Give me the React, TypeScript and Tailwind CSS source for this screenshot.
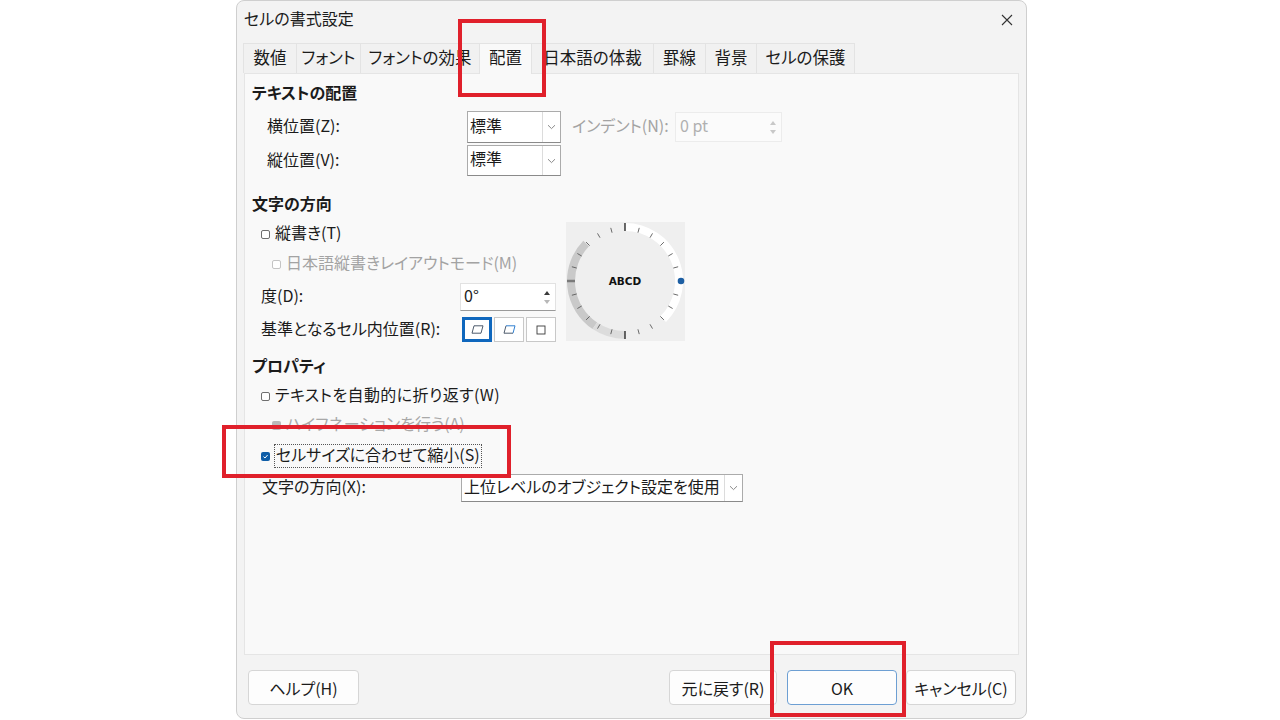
import React from 'react';

// Format Cells dialog (配置 tab)

// Noto CJK sits a little low in its line box; lift glyphs by ~2px
const T = 'leading-[20px] pb-[4px]';

const tabs: { label: string; w: string; active?: boolean }[] = [
  { label: '数値', w: 'w-[54px]' },
  { label: 'フォント', w: 'w-[65px]' },
  { label: 'フォントの効果', w: 'w-[120px]' },
  { label: '配置', w: 'w-[53px]', active: true },
  { label: '日本語の体裁', w: 'w-[123px]' },
  { label: '罫線', w: 'w-[53px]' },
  { label: '背景', w: 'w-[52px]' },
  { label: 'セルの保護', w: 'w-[99px]' },
];

const Chevron = () => (
  <svg width="9" height="6" viewBox="0 0 9 6">
    <path d="M1 1.2 L4.5 4.6 L8 1.2" fill="none" stroke="#8a8a8a" strokeWidth="1" />
  </svg>
);

const Checkbox = ({ state }: { state: 'off' | 'on' | 'disabled' | 'mixed-disabled' }) => {
  if (state === 'on') {
    return (
      <span className="flex items-center justify-center w-[9px] h-[9px] rounded-[2px] bg-[#0f5ea8]">
        <svg width="7" height="7" viewBox="0 0 7 7">
          <path d="M1.5 3.6 L3 5 L5.6 2" fill="none" stroke="#ffffff" strokeWidth="1" />
        </svg>
      </span>
    );
  }
  if (state === 'mixed-disabled') {
    return <span className="block w-[9px] h-[9px] rounded-[2px] bg-[#b9b9b9]" />;
  }
  return (
    <span
      className={
        state === 'disabled'
          ? 'block w-[9px] h-[9px] rounded-[2px] border border-[#c4c4c4] bg-white'
          : 'block w-[9px] h-[9px] rounded-[2px] border border-[#6f6f6f] bg-white'
      }
    />
  );
};

const Spin = ({ dim }: { dim?: boolean }) => (
  <div className="flex flex-col items-center justify-center gap-[5px] w-[16px]">
    <svg width="6" height="4" viewBox="0 0 6 4">
      <path d="M0 4 L3 0 L6 4 Z" fill={dim ? '#c8c8c8' : '#3a3a3a'} />
    </svg>
    <svg width="6" height="4" viewBox="0 0 6 4">
      <path d="M0 0 L3 4 L6 0 Z" fill={dim ? '#c8c8c8' : '#b8b8b8'} />
    </svg>
  </div>
);

const Heading = ({ children, className }: { children: React.ReactNode; className: string }) => (
  <div className={`h-[24px] leading-[20px] pb-[4px] font-bold text-[#1b1b1b] pl-[7px] ${className}`}>{children}</div>
);

const Dial = () => {
  const cx = 59;
  const cy = 59;
  const pt = (r: number, a: number) => {
    const rad = (a * Math.PI) / 180;
    return [cx + r * Math.cos(rad), cy - r * Math.sin(rad)];
  };
  const arc = (r: number, a1: number, a2: number) => {
    const [x1, y1] = pt(r, a1);
    const [x2, y2] = pt(r, a2);
    const large = a2 - a1 > 180 ? 1 : 0;
    return `M${x1} ${y1} A${r} ${r} 0 ${large} 0 ${x2} ${y2}`;
  };
  const ticks = [];
  for (let a = 15; a < 360; a += 15) {
    const major = a === 90 || a === 270;
    const left = a === 180;
    const [x1, y1] = pt(50, a);
    const [x2, y2] = pt(major || left ? 58 : 55, a);
    ticks.push(
      <line
        key={a}
        x1={x1}
        y1={y1}
        x2={x2}
        y2={y2}
        stroke={left ? '#7a7a7a' : major ? '#2a2a2a' : '#5a5a5a'}
        strokeWidth={left ? 2.5 : major ? 1.4 : 0.9}
      />
    );
  }
  const [dx, dy] = pt(56, 0);
  return (
    <div className="w-[119px] h-[119px] bg-[#efefef]">
      <svg width="119" height="119" viewBox="0 0 119 119">
        <path d={arc(54, -45, 90)} fill="none" stroke="#ffffff" strokeWidth="8" />
        <path d={arc(54, 136, 236)} fill="none" stroke="#c9c9c9" strokeWidth="8" />
        <path d={arc(54, 236, 270)} fill="none" stroke="#dcdcdc" strokeWidth="8" />
        {ticks}
        <circle cx={dx} cy={dy} r="3.3" fill="#1d5fa3" />
        <text
          x={cx}
          y={cy + 4}
          textAnchor="middle"
          fontSize="10.5"
          fontWeight="bold"
          fill="#111"
          fontFamily="'DejaVu Sans', sans-serif"
        >
          ABCD
        </text>
      </svg>
    </div>
  );
};

export default function App() {
  return (
    <div className="relative w-[1280px] h-[720px] overflow-hidden bg-white pl-[236px] font-['Noto_Sans_CJK_JP','Noto_Sans',sans-serif] [font-feature-settings:'palt'] text-[16px] text-[#1b1b1b]">
      <div className="flex flex-col w-[791px] h-[719px] bg-[#f3f3f3] border border-[#cfcfcf] rounded-[8px]">
        {/* title bar */}
        <div className="flex items-center justify-between h-[36px] pl-[7px] pr-[13px] pt-[1px]">
          <span className={T}>セルの書式設定</span>
          <svg width="12" height="12" viewBox="0 0 12 12">
            <path d="M1 1 L11 11 M11 1 L1 11" stroke="#333" strokeWidth="1.1" />
          </svg>
        </div>

        {/* tabs */}
        <div className="flex h-[30px] mt-[6px] ml-[7px]">
          {tabs.map((t) => (
            <div
              key={t.label}
              className={
                t.active
                  ? `${t.w} flex items-center justify-center h-[31px] -ml-px bg-[#f9f9f9] border-t border-l border-r border-[#e3e3e3] relative z-10 pb-[4px] text-[16.5px]`
                  : `${t.w} flex items-center justify-center h-[30px] -ml-px bg-[#f1f1f1] border-t border-l border-r border-[#e3e3e3] pb-[3px] text-[16.5px]`
              }
            >
              <span className="leading-[20px]">{t.label}</span>
            </div>
          ))}
        </div>

        {/* panel */}
        <div className="flex-1 flex flex-col ml-[7px] mr-[7px] bg-[#f9f9f9] border border-[#e5e5e5]">
          <Heading className="mt-[8px]">テキストの配置</Heading>

          <div className="flex items-center h-[32px] mt-[5px] pl-[22px]">
            <span className={`w-[200px] ${T}`}>横位置(Z):</span>
            <div className="flex w-[94px] h-[32px] bg-white border border-[#ababab] border-b-[#8a8a8a]">
              <span className="flex-1 pl-[2px] leading-[26px] pb-[4px]">標準</span>
              <span className="flex items-center justify-center w-[18px] border-l border-[#dcdcdc]">
                <Chevron />
              </span>
            </div>
            <span className={`ml-[11px] w-[103px] text-[#a3a3a3] ${T}`}>インデント(N):</span>
            <div className="flex w-[107px] h-[30px] bg-[#fbfbfb] border border-[#ececec]">
              <span className="flex-1 pl-[4px] leading-[24px] pb-[4px] text-[#b0b0b0]">0 pt</span>
              <Spin dim />
            </div>
          </div>

          <div className="flex items-center h-[31px] mt-[2px] pl-[22px]">
            <span className={`w-[200px] ${T}`}>縦位置(V):</span>
            <div className="flex w-[94px] h-[31px] bg-white border border-[#ababab] border-b-[#8a8a8a]">
              <span className="flex-1 pl-[2px] leading-[25px] pb-[4px]">標準</span>
              <span className="flex items-center justify-center w-[18px] border-l border-[#dcdcdc]">
                <Chevron />
              </span>
            </div>
          </div>

          <Heading className="mt-[17px]">文字の方向</Heading>

          <div className="flex mt-[5px] pl-[16px]">
            <div className="flex flex-col w-[305px]">
              <div className="flex items-center gap-[5px] h-[24px]">
                <Checkbox state="off" />
                <span className={T}>縦書き(T)</span>
              </div>
              <div className="flex items-center gap-[5px] h-[24px] mt-[6px] pl-[11px] text-[#a3a3a3]">
                <Checkbox state="disabled" />
                <span className={T}>日本語縦書きレイアウトモード(M)</span>
              </div>
              <div className="flex items-center h-[28px] mt-[7px]">
                <span className={`w-[199px] ${T}`}>度(D):</span>
                <div className="flex w-[96px] h-[28px] bg-white border border-[#e2e2e2] border-b-[#9a9a9a]">
                  <span className="flex-1 pl-[3px] leading-[22px] pb-[4px]">0°</span>
                  <Spin />
                </div>
              </div>
              <div className="flex items-center h-[25px] mt-[6px]">
                <span className={`w-[201px] ${T}`}>基準となるセル内位置(R):</span>
                <div className="flex gap-[2px]">
                  <div className="flex items-center justify-center w-[30px] h-[25px] bg-white border-[3px] border-[#0f67bd]">
                    <svg width="13" height="9" viewBox="0 0 13 9">
                      <path d="M3 0.8 L12 0.8 L10 8.2 L1 8.2 Z" fill="none" stroke="#3b4a5c" strokeWidth="0.9" />
                    </svg>
                  </div>
                  <div className="flex items-center justify-center w-[30px] h-[25px] bg-white border border-[#c8c8c8]">
                    <svg width="13" height="9" viewBox="0 0 13 9">
                      <path d="M10 8.2 L1 8.2 L3 0.8" fill="none" stroke="#3b4a5c" strokeWidth="0.9" />
                      <path d="M3 0.8 L12 0.8 L10 8.2" fill="none" stroke="#2f7fd0" strokeWidth="1" />
                    </svg>
                  </div>
                  <div className="flex items-center justify-center w-[30px] h-[25px] bg-white border border-[#c8c8c8]">
                    <svg width="10" height="10" viewBox="0 0 10 10">
                      <rect x="1" y="1" width="8" height="8" fill="none" stroke="#3a3a3a" strokeWidth="0.9" />
                    </svg>
                  </div>
                </div>
              </div>
            </div>
            <Dial />
          </div>

          <Heading className="mt-[13px]">プロパティ</Heading>

          <div className="flex items-center gap-[5px] h-[24px] mt-[5px] pl-[16px]">
            <Checkbox state="off" />
            <span className={`${T} tracking-[0.4px]`}>テキストを自動的に折り返す(W)</span>
          </div>
          <div className="flex items-center gap-[5px] h-[24px] mt-[5px] pl-[27px] text-[#a8a8a8]">
            <Checkbox state="mixed-disabled" />
            <span className={T}>ハイフネーションを行う(A)</span>
          </div>
          <div className="flex items-center gap-[4px] h-[24px] mt-[7px] pl-[16px]">
            <Checkbox state="on" />
            <span className="px-[1px] leading-[19px] pb-[3px] border border-dotted border-[#555]">セルサイズに合わせて縮小(S)</span>
          </div>
          <div className="flex items-center h-[28px] mt-[6px] pl-[17px]">
            <span className={`w-[199px] ${T}`}>文字の方向(X):</span>
            <div className="flex w-[282px] h-[28px] bg-white border border-[#ababab] border-b-[#8a8a8a]">
              <span className="flex-1 pl-[2px] leading-[22px] pb-[4px]">上位レベルのオブジェクト設定を使用</span>
              <span className="flex items-center justify-center w-[18px] border-l border-[#dcdcdc]">
                <Chevron />
              </span>
            </div>
          </div>
        </div>

        {/* footer buttons */}
        <div className="flex items-start h-[63px] pt-[15px] pl-[11px] pr-[10px]">
          <button className="w-[111px] h-[35px] bg-[#fdfdfd] border border-[#d6d6d6] rounded-[4px] leading-[24px]">
            ヘルプ(H)
          </button>
          <div className="flex-1" />
          <button className="w-[108px] h-[35px] bg-[#fdfdfd] border border-[#d6d6d6] rounded-[4px] leading-[24px]">
            元に戻す(R)
          </button>
          <button className="w-[110px] h-[35px] ml-[10px] bg-[#fdfdfd] border border-[#6d9fd3] rounded-[4px] leading-[24px]">
            OK
          </button>
          <button className="w-[110px] h-[35px] ml-[9px] bg-[#fdfdfd] border border-[#d6d6d6] rounded-[4px] leading-[24px]">
            キャンセル(C)
          </button>
        </div>
      </div>

      {/* red annotation frames */}
      <div className="absolute left-[458px] top-[19px] w-[88px] h-[78px] border-4 border-[#e0202b]" />
      <div className="absolute left-[222px] top-[425px] w-[289px] h-[53px] border-4 border-[#e0202b]" />
      <div className="absolute left-[770px] top-[641px] w-[136px] h-[76px] border-4 border-[#e0202b]" />
    </div>
  );
}
